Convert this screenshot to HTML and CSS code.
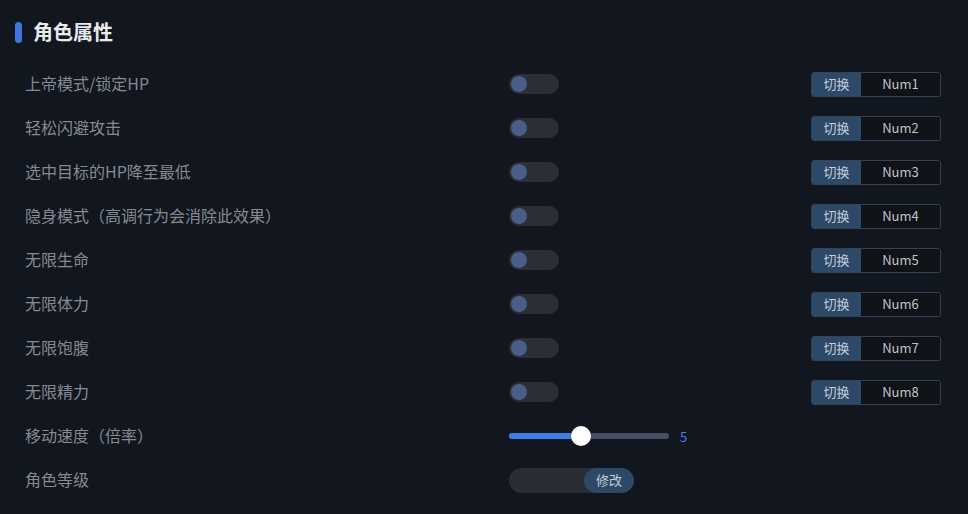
FILE: index.html
```html
<!DOCTYPE html>
<html>
<head>
    <title>角色属性</title>
    <link rel="stylesheet" href="styles.css">
</head>
<body>
    <div class="panel">
        <div class="panel-head">
            <span class="mark"></span>
            <h2>角色属性</h2>
        </div>

        <div class="rows">
            <div class="row">
                <span class="label">上帝模式/锁定HP</span>
                <span class="switch"><span class="knob"></span></span>
                <div class="hotkey"><span class="act">切换</span><span class="key">Num1</span></div>
            </div>
            <div class="row">
                <span class="label">轻松闪避攻击</span>
                <span class="switch"><span class="knob"></span></span>
                <div class="hotkey"><span class="act">切换</span><span class="key">Num2</span></div>
            </div>
            <div class="row">
                <span class="label">选中目标的HP降至最低</span>
                <span class="switch"><span class="knob"></span></span>
                <div class="hotkey"><span class="act">切换</span><span class="key">Num3</span></div>
            </div>
            <div class="row">
                <span class="label">隐身模式（高调行为会消除此效果）</span>
                <span class="switch"><span class="knob"></span></span>
                <div class="hotkey"><span class="act">切换</span><span class="key">Num4</span></div>
            </div>
            <div class="row">
                <span class="label">无限生命</span>
                <span class="switch"><span class="knob"></span></span>
                <div class="hotkey"><span class="act">切换</span><span class="key">Num5</span></div>
            </div>
            <div class="row">
                <span class="label">无限体力</span>
                <span class="switch"><span class="knob"></span></span>
                <div class="hotkey"><span class="act">切换</span><span class="key">Num6</span></div>
            </div>
            <div class="row">
                <span class="label">无限饱腹</span>
                <span class="switch"><span class="knob"></span></span>
                <div class="hotkey"><span class="act">切换</span><span class="key">Num7</span></div>
            </div>
            <div class="row">
                <span class="label">无限精力</span>
                <span class="switch"><span class="knob"></span></span>
                <div class="hotkey"><span class="act">切换</span><span class="key">Num8</span></div>
            </div>
            <div class="row">
                <span class="label">移动速度（倍率）</span>
                <div class="slider-wrap">
                    <div class="slider">
                        <span class="fill" style="width: 72px"></span>
                        <span class="thumb" style="left: 72px"></span>
                    </div>
                    <span class="value">5</span>
                </div>
                <span></span>
            </div>
            <div class="row">
                <span class="label">角色等级</span>
                <div class="edit">
                    <span class="field"></span>
                    <button class="apply">修改</button>
                </div>
                <span></span>
            </div>
        </div>
    </div>
</body>
</html>
```

FILE: styles.css
```css
body {
    margin: 0;
    background: #12161e;
    font-family: "Noto Sans CJK SC", "Noto Sans", sans-serif;
    color: #858a93;
}
.panel {
    padding: 22px 27px 0 15px;
}
.panel-head {
    display: flex;
    align-items: center;
    height: 20px;
    margin-bottom: 20px;
}
.mark {
    width: 7px;
    height: 21px;
    border-radius: 4px;
    background: #3c78e0;
    margin-right: 11px;
}
.panel-head h2 {
    margin: 0;
    font-size: 20px;
    font-weight: bold;
    color: #e8eaee;
    line-height: 20px;
}
.rows {
    padding-left: 10px;
}
.row {
    display: grid;
    grid-template-columns: 484px 1fr auto;
    align-items: center;
    height: 44px;
}
.label {
    font-size: 16px;
    line-height: 20px;
    padding-bottom: 2px;
}
.switch {
    position: relative;
    width: 50px;
    height: 20px;
    border-radius: 10px;
    background: #2b2e35;
}
.knob {
    position: absolute;
    left: 2px;
    top: 2px;
    width: 16px;
    height: 16px;
    border-radius: 50%;
    background: #4a5e88;
}
.hotkey {
    display: flex;
    height: 25px;
    font-size: 13px;
    border: 1px solid #344256;
    border-radius: 3px;
    box-sizing: border-box;
    overflow: hidden;
}
.hotkey .act {
    width: 49px;
    background: #2d4968;
    color: #c5cdd8;
    display: flex;
    align-items: center;
    justify-content: center;
    padding-bottom: 1px;
}
.hotkey .key {
    width: 79px;
    background: #0f1217;
    color: #bfc4cb;
    display: flex;
    align-items: center;
    justify-content: center;
    padding-bottom: 1px;
}
.slider-wrap {
    display: flex;
    align-items: center;
}
.slider {
    position: relative;
    width: 160px;
    height: 6px;
    border-radius: 3px;
    background: #4a4d66;
}
.fill {
    position: absolute;
    left: 0;
    top: 0;
    height: 6px;
    border-radius: 3px;
    background: #3c7de6;
}
.thumb {
    position: absolute;
    top: -7px;
    width: 20px;
    height: 20px;
    margin-left: -10px;
    border-radius: 50%;
    background: #ffffff;
}
.value {
    margin-left: 11px;
    font-size: 13px;
    color: #3c7de6;
}
.edit {
    display: flex;
    width: 125px;
    height: 25px;
    border-radius: 13px;
    background: #2a2d33;
    overflow: hidden;
}
.field {
    flex: 1;
}
.apply {
    width: 50px;
    border: none;
    border-radius: 13px;
    background: #2d4968;
    color: #c5cdd8;
    font-size: 13px;
    font-family: "Noto Sans CJK SC", "Noto Sans", sans-serif;
    padding: 0 0 1px;
}
```
